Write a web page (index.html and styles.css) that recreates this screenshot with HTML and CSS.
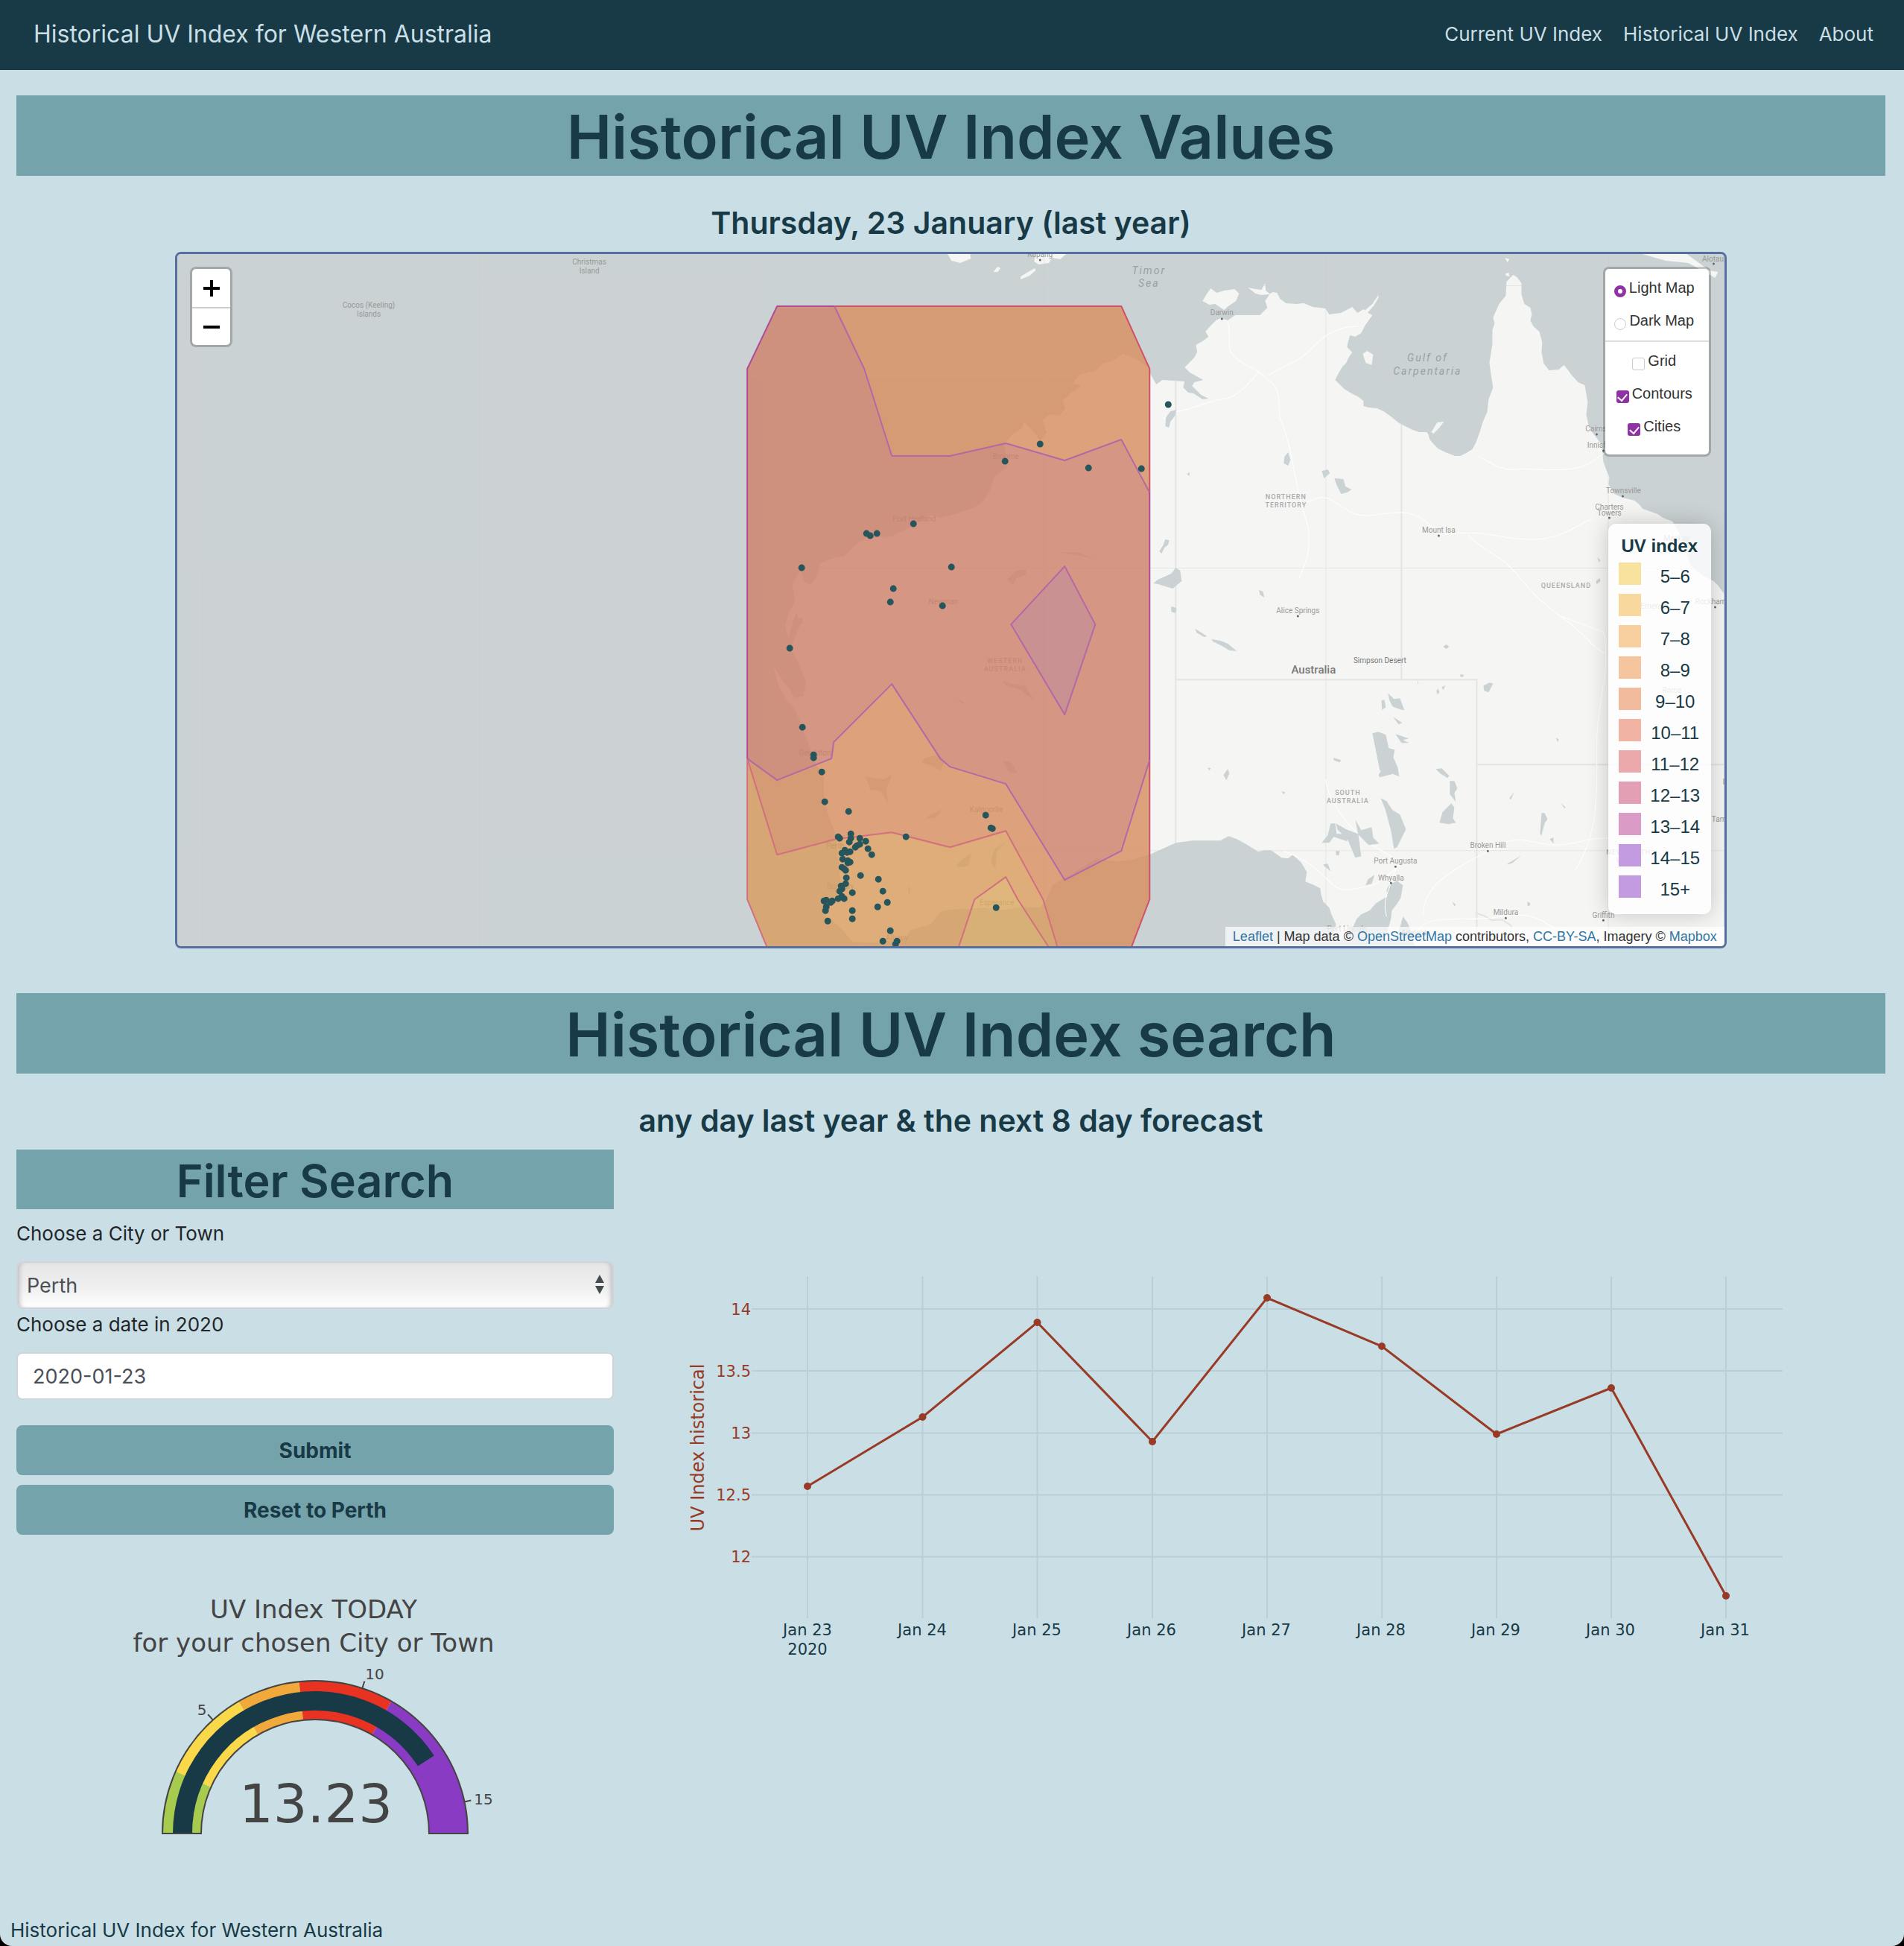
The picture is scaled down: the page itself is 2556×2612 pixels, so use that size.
FILE: index.html
```html
<!DOCTYPE html>
<html lang="en">
<head>
<meta charset="utf-8">
<meta name="viewport" content="width=device-width, initial-scale=1">
<title>Historical UV Index for Western Australia</title>
<link rel="stylesheet" href="styles.css">
</head>
<body>
<header class="navbar">
  <a class="brand" href="#">Historical UV Index for Western Australia</a>
  <nav class="nav-links">
    <a href="#">Current UV Index</a>
    <a href="#">Historical UV Index</a>
    <a href="#">About</a>
  </nav>
</header>

<main class="page">
  <h1 class="banner">Historical UV Index Values</h1>
  <h2 class="subtitle">Thursday, 23 January (last year)</h2>

  <section class="map" aria-label="UV index map">
    <svg class="map-canvas" viewBox="238 341 2076 929" preserveAspectRatio="xMidYMid slice" role="img" aria-label="Map of Australia">
      <rect class="sea" x="238" y="341" width="2076" height="929"/>
      <path class="sea-tile" d="M238 383h26v379h-26zM643 383h379v379H643zM264 762h758v379H264zM238 1141h405v129H238z"/>

      <!-- land -->
      <path class="land" d="M1543 495L1525 482 1507 475 1495 484 1480 488 1472 497 1449 503 1440 514 1451 518 1438 527 1426 538 1430 548 1422 558 1408 556 1399 564 1405 580 1396 592 1386 578 1375 567 1370 576 1361 581 1348 595 1352 627 1334 641 1328 660 1319 673 1308 681 1285 689 1262 695 1250 691 1238 697 1223 707 1197 720 1162 722 1148 732 1132 747 1115 750 1101 756 1096 774 1088 785 1080 782 1076 770 1075 766 1069 774 1063 785 1066 797 1066 810 1058 824 1054 839 1058 859 1064 835 1069 822 1074 838 1061 871 1072 890 1082 914 1078 934 1066 937 1060 925 1051 914 1038 894 1045 920 1055 938 1068 954 1078 980 1086 1000 1093 1023 1106 1040 1106 1069 1112 1095 1122 1120 1125 1150 1128 1184 1122 1204 1107 1207 1108 1230 1124 1241 1145 1264 1174 1265 1197 1262 1216 1258 1222 1248 1235 1244 1248 1241 1258 1230 1262 1223 1273 1221 1323 1218 1346 1221 1370 1217 1396 1218 1404 1208 1407 1201 1412 1188 1419 1184 1445 1169 1472 1152 1496 1156 1518 1154 1545 1146 1578 1131 1600 1128 1638 1128 1649 1122 1660 1126 1671 1132 1689 1143 1697 1141 1706 1141 1720 1151 1729 1152 1735 1147 1746 1157 1754 1170 1752 1183 1762 1187 1772 1192 1773 1200 1776 1210 1784 1218 1787 1227 1793 1240 1789 1262 1800 1262 1817 1242 1821 1233 1827 1227 1838 1222 1847 1212 1862 1203 1861 1194 1865 1187 1875 1182 1883 1188 1880 1205 1875 1213 1868 1222 1867 1232 1865 1240 1858 1262 1872 1260 1879 1245 1883 1230 1889 1238 1893 1247 1896 1262 1900 1270H2314V797L2306 786 2300 780 2286 773 2277 766 2268 757 2264 742 2260 730 2254 716 2245 700 2232 695 2225 690 2205 683 2200 677 2194 672 2178 668 2167 663 2159 650 2160 640 2156 631 2152 620 2150 597 2137 580 2132 570 2129 557 2131 540 2127 517 2118 513 2109 503 2104 496 2099 490 2092 496 2079 497 2072 488 2069 473 2070 460 2066 445 2058 438 2054 430 2056 422 2054 413 2046 408 2042 395 2042 380 2036 372 2031 369 2022 378 2021 397 2012 408 2008 417 2004 426 2006 434 2003 443 2003 462 1999 487 2002 508 2004 520 1998 536 1996 553 1990 567 1986 580 1981 594 1976 603 1968 608 1960 612 1953 612 1940 607 1930 602 1925 597 1919 590 1917 583 1915 580 1905 580 1896 577 1888 573 1878 568 1868 560 1857 552 1848 548 1837 547 1830 545 1830 538 1822 532 1814 528 1804 522 1798 516 1792 510 1797 500 1802 492 1807 487 1810 480 1815 473 1808 466 1809 460 1812 450 1819 452 1827 447 1832 437 1842 423 1836 420 1830 415 1822 420 1815 412 1800 420 1784 422 1779 414 1762 412 1750 407 1740 408 1726 407 1718 401 1714 393 1708 392 1704 395 1698 404 1701 413 1691 423 1675 423 1658 423 1648 430 1638 427 1632 430 1625 437 1618 445 1622 452 1614 458 1605 463 1607 472 1603 480 1595 488 1590 493 1597 500 1615 510 1603 513 1600 518 1606 524 1612 530 1622 535 1614 536 1602 528 1595 527 1588 520 1590 512 1575 511 1560 510 1552 516 1544 502z"/>
      <path class="land" d="M1614 404l6-10 5-7 8 6 10-3 14-2 6 6-4 10-12 8-4 4-12-8-8 1zM1675 386l10 2 8 1 5-9 1 10 6 5-12 1-8-2zM1829 475l6-4 8 5-2 14-8-3zM1921 580l8-13 9-1-6 8-8 8zM2020 346l6 2-3 4zM2021 367l4-1 1 5-5-1zM1272 341h30l1 6-14 6-12-3zM1390 341h41l-8 7-11-2-4 7-14 2-6-4zM1333 365l6-7 4 2-4 5zM1370 371l10-6 9-5 1 3-8 7-12 5zM2204 341h60l30 22 12 2-4 8-14-8-22-12-30-3zM1850 400l-6 10-12 14-4-4 14-12 8-12z"/>

      <!-- graticule -->
      <path class="graticule" d="M264.500 341v929M643.500 341v929M1022.500 341v929M1401.500 341v929M1779.500 341v929M2158.500 341v929M238 383.500h2076M238 762.500h2076M238 1141.500h2076"/>
      <!-- state borders -->
      <path class="border" d="M1578 511V1131M1881 570V912M1578 912H1982V1270M1982 1026H2314M1980 1225l12 4 10 6 14-1 12 8 2 12"/>
      <!-- highways -->
      <path class="road" d="M1648 432c6 22-4 36 10 48s22 12 30 18 18 14 24 22 4 30 6 42c14 30 18 70 26 104s18 44 10 84l-10 26M1690 498c-14 18-30 36-50 38s-40 14-60 16l-20 10M1702 504c22-14 40-18 54-32s30-34 66-34M1755 674c16-8 24-8 34-2s24 20 44 20 46-10 68 0 22 28 56 24 60 8 100 8 60-20 80-28M1983 612c14 6 30 20 50 18s40 2 70 0 40-16 50-22M1970 718c20 20 40 26 56 42s30 40 70 68 40 44 60 48M1779 1046c4 26 20 50 44 74s52 24 50 44-20 40-12 66M1723 1142c30 12 40 20 60 40s30 10 50 8 40-26 56-36M1910 1228c0-40 40-60 80-82s40-22 80-14 60-12 100-6M1894 1260c20-40 60-20 120-30s60 20 90 18M2092 826l60 22c10 40-4 80-8 130s10 130-30 190"/>

      <!-- lakes -->
      <path class="lake" d="M1565 560l6-8 8-2-2 8-6 8-2 8-5-2zM1724 613l5-6 3 10-3 8-6-3zM1774 632l8-2 3 5-8 7zM1791 642l12 1 3 10 8 4-6 4-8 2-6-12zM1593 636l4-2-1 5zM1564 724l5 1-1 6-5 4-4 8-3-3 5-8zM1554 778l18-8 6-8 6 4 2 14-12 10-20-6-6-1zM1690 792l5 2 2 8-6-4zM1572 814l7 2-1 7-6-2zM1604 844l10 6 6 4-4 1-10-6zM1626 858l12 2 10 4 12 10-10-1-10-6-12-6zM1937 868l4-3 4 3-4 3zM1960 905l5 1-2 3-3-1zM1991 920l8-4 5 1-6 12-6-2zM1928 927l2-3 2 5-3 3zM1935 922l5-2-3 6zM1902 912l2 5-1 1zM1854 940l4-1 2 10-5 4zM1863 930l8 8 8-1 6 16-6-1-10-4-4-8zM1870 962l12 8-5 2zM1842 984l8-2 10 4 4 18 8 2-2 10 6 14 2 12-10-4-10-2-6-2zM1873 985l18 6-8 2 8 4-10 0zM1850 1040l4-6 20-5-6 10-16 4zM1790 1017l10 3-2 3-8-3zM1927 1032l8-1 10 10-2 3-10-6zM1946 1048l6 0 4 10-4 6 2 12-8-10zM1948 1078l4 6-2 14 4 6-10 2-12-2 4-14 8-8zM1853 1071l8 4 8 12 10 6 8 20-12 24-4 2-4-24-8-30zM1786 1105l6 0 2 14 16 0-2 10-18-6-6 8-10 0 8-10zM1793 1105l14 8 16 6 4 30-8 2-10-24-14-14zM1819 1100l8 14 14-4 2 14 8 8-14 2-14-14zM1793 1142h5l-1 6-4-1zM1642 1040l6-8 2 6-4 9zM1621 1030l4 1-2 3zM1720 1062l5 1-2 3zM2069 1091l4 0 4 8-4 6-4 16-2-2zM2080 1126l5-2 0 8zM2022 1160l20-12-12 10-6 2zM2032 1063l-4 10-2-2zM2095 1078l6 5-1 2zM2142 780l5-4 1 4-5 4zM2144 748l4 4-2 3zM2088 990l4 2-1 4zM1949 1210l5 4-2 2zM2050 1210l4 2-1 4-3-1zM1776 1160l6-1 4 10-8-6zM1836 1180l9-6-4 12-8 2z"/>
      <path class="lake" d="M1352 778l12-12 14-2-2 8-12 4-4 10zM1346 914l14 4 16 2 12 20-18-14-20-6zM1240 1018l20-6 8 10-6 12-10-6-14-4zM1162 1042l24 4 12-8-8 20 2 20-10-16-14-2-4-12zM1346 1020l12 4 8 14-12-2zM1284 1160l20-16-4 18-14 2zM1334 1140l16-10-12 12-2 24-6-8zM1246 1095l20-10-10 12-14 2zM1284 938l10 4-1 3zM1218 1188l4 6-2 8zM1420 742l26-1 24 10-22-6zM1066 834l10-6 2 8-14 10z"/>

      <g class="place">
        <text x="791" y="355">Christmas</text><text x="791" y="367">Island</text>
        <text x="495" y="413">Cocos (Keeling)</text><text x="495" y="425">Islands</text>
        <text x="1396" y="345">Kupang</text><text x="1640" y="423">Darwin</text>
        <text x="2142" y="579">Cairns</text><text x="2148" y="601">Innisfail</text>
        <text x="2179" y="662">Townsville</text><text x="2160" y="684">Charters</text><text x="2160" y="692">Towers</text>
        <text x="2299" y="351">Alotau</text><text x="1931" y="715">Mount Isa</text><text x="1742" y="823">Alice Springs</text>
        <text x="1997" y="1138">Broken Hill</text><text x="1873" y="1159">Port Augusta</text><text x="1867" y="1182">Whyalla</text>
        <text x="2021" y="1228">Mildura</text><text x="2152" y="1232">Griffith</text><text x="1808" y="1250">Port Lincoln</text>
        <text x="1900" y="1256">Adelaide</text><text x="2250" y="726">Mackay</text><text x="2306" y="811">Rockhampton</text>
        <text x="2220" y="817">Emerald</text><text x="2244" y="930">Roma</text><text x="2328" y="1053">Inverell</text><text x="2320" y="1103">Tamworth</text>
        <text x="1350" y="616">Broome</text><text x="1227" y="700">Port Hedland</text><text x="1266" y="811">Newman</text>
        <text x="1094" y="1014">Geraldton</text><text x="1128" y="1193">Bunbury</text>
        <text x="1338" y="1215">Esperance</text><text x="1204" y="1262">Albany</text><text x="1324" y="1090">Kalgoorlie</text>
      </g>
      <g class="place place-dark"><text x="1852" y="890">Simpson Desert</text><text x="1121" y="1139">Perth</text></g>
      <text class="country" x="1763" y="904">Australia</text>
      <g class="water">
        <text x="1542" y="368">Timor</text><text x="1542" y="385">Sea</text>
        <text x="1916" y="485">Gulf of</text><text x="1916" y="503">Carpentaria</text>
      </g>
      <g class="state">
        <text x="1726" y="670">NORTHERN</text><text x="1726" y="681">TERRITORY</text>
        <text x="2102" y="789">QUEENSLAND</text>
        <text x="1809" y="1067">SOUTH</text><text x="1809" y="1078">AUSTRALIA</text>
        <text x="2186" y="1147">NEW SOUTH</text><text x="2186" y="1158">WALES</text>
        <text x="1349" y="890">WESTERN</text><text x="1349" y="901">AUSTRALIA</text>
      </g>
      <path class="town-dot" d="M1396 349h0M1640 428h0M2143 583h0M2152 605h0M2178 666h0M2160 695h0M2300 354h0M1931 719h0M1742 827h0M1997 1142h0M1873 1163h0M1867 1185h0M2021 1232h0M2152 1235h0M2302 815h0"/>

      <!-- UV contours -->
      <g class="contour-fills">
        <path class="uv-orange" d="M1043 411H1505L1543 495V1207L1519 1270H1029L1003 1207V495z"/>
        <path class="uv-red" d="M1043 411H1120L1160 495 1197 612H1275L1350 595 1429 618 1505 590 1543 661V1020L1505 1142 1429 1181 1350 1052 1275 1029 1262 1018 1197 918 1119 996 1116 1018 1043 1047 1003 1018V495z"/>
        <path class="uv-pink" d="M1429 760L1470 838 1429 959 1357 838z"/>
        <path class="uv-amber" d="M1003 1018L1043 1147 1122 1126 1197 1117 1275 1137 1350 1115 1400 1207 1419 1270H1029L1003 1207z"/>
        <path class="uv-yellow" d="M1287 1270L1308 1207 1350 1177 1366 1207 1407 1270z"/>
      </g>
      <path class="line-rose" d="M1029 1270L1003 1207V1018L1043 1147 1122 1126 1197 1117 1275 1137 1350 1115 1400 1207 1419 1270M1287 1270L1308 1207 1350 1177 1366 1207 1407 1270"/>
      <path class="line-crimson" d="M1120 411H1505L1543 495V661M1543 1020V1207L1519 1270"/>
      <path class="line-violet" d="M1120 411L1160 495 1197 612H1275L1350 595 1429 618 1505 590 1543 661M1543 1020L1505 1142 1429 1181 1350 1052 1275 1029 1262 1018 1197 918 1119 996 1116 1018 1043 1047 1003 1018M1429 760L1470 838 1429 959 1357 838z"/>
      <path class="line-magenta" d="M1120 411H1043L1003 495V1018M1543 661V1020"/>

      <!-- cities and towns -->
      <path class="city" d="M1568 543h0M1396 596h0M1349 619h0M1461 628h0M1532 629h0M1226 703h0M1163 716h0M1168 719h0M1177 716h0M1076 762h0M1277 761h0M1199 790h0M1195 808h0M1265 813h0M1060 870h0M1077 976h0M1092 1013h0M1092 1017h0M1103 1036h0M1107 1076h0M1139 1089h0M1323 1094h0M1330 1111h0M1332 1112h0M1216 1123h0M1142 1119h0M1125 1123h0M1127 1125h0M1142 1125h0M1140 1130h0M1154 1125h0M1162 1129h0M1154 1133h0M1150 1135h0M1148 1137h0M1165 1139h0M1170 1147h0M1134 1141h0M1141 1143h0M1137 1144h0M1130 1145h0M1131 1153h0M1138 1155h0M1141 1157h0M1138 1158h0M1130 1164h0M1133 1166h0M1135 1168h0M1136 1178h0M1155 1175h0M1179 1180h0M1135 1186h0M1129 1189h0M1130 1193h0M1127 1196h0M1144 1198h0M1185 1196h0M1191 1211h0M1178 1217h0M1130 1203h0M1125 1206h0M1133 1206h0M1106 1209h0M1109 1208h0M1117 1209h0M1115 1211h0M1109 1217h0M1108 1222h0M1144 1222h0M1144 1233h0M1111 1236h0M1195 1249h0M1185 1263h0M1204 1263h0M1202 1267h0M1337 1218h0"/>
    </svg>

    <div class="zoom-control">
      <button type="button" aria-label="Zoom in"><svg width="24" height="24" viewBox="0 0 24 24"><path d="M12 1v22M1 12h22"/></svg></button>
      <button type="button" aria-label="Zoom out"><svg width="24" height="24" viewBox="0 0 24 24"><path d="M1 12h22"/></svg></button>
    </div>

    <form class="layer-control">
      <div class="layer-group">
        <label><input type="radio" name="base" checked>Light Map</label>
        <label><input type="radio" name="base">Dark Map</label>
      </div>
      <div class="layer-group overlays">
        <label><input type="checkbox">Grid</label>
        <label><input type="checkbox" checked>Contours</label>
        <label><input type="checkbox" checked>Cities</label>
      </div>
    </form>

    <div class="legend">
      <h4>UV index</h4>
      <ul>
        <li><i class="s5"></i><span>5–6</span></li>
        <li><i class="s6"></i><span>6–7</span></li>
        <li><i class="s7"></i><span>7–8</span></li>
        <li><i class="s8"></i><span>8–9</span></li>
        <li><i class="s9"></i><span>9–10</span></li>
        <li><i class="s10"></i><span>10–11</span></li>
        <li><i class="s11"></i><span>11–12</span></li>
        <li><i class="s12"></i><span>12–13</span></li>
        <li><i class="s13"></i><span>13–14</span></li>
        <li><i class="s14"></i><span>14–15</span></li>
        <li><i class="s14"></i><span>15+</span></li>
      </ul>
    </div>

    <p class="attribution"><a href="#">Leaflet</a> | Map data © <a href="#">OpenStreetMap</a> contributors, <a href="#">CC-BY-SA</a>, Imagery © <a href="#">Mapbox</a></p>
  </section>

  <h1 class="banner">Historical UV Index search</h1>
  <h2 class="subtitle">any day last year &amp; the next 8 day forecast</h2>

  <div class="search">
    <section class="filter">
      <h3 class="filter-title">Filter Search</h3>
      <form>
        <label for="city">Choose a City or Town</label>
        <div class="select-box">
          <select id="city"><option>Perth</option></select>
          <svg width="14" height="26" viewBox="0 0 14 26" aria-hidden="true"><path d="M7 0l6 11H1zM7 26l6-11H1z"/></svg>
        </div>
        <label for="date">Choose a date in 2020</label>
        <input id="date" type="text" value="2020-01-23">
        <div class="actions">
          <button type="submit">Submit</button>
          <button type="reset">Reset to Perth</button>
        </div>
      </form>
      <svg class="gauge" viewBox="22 2061 802 430" role="img" aria-label="UV Index today gauge">
        <g class="gauge-title"><text x="421" y="2173">UV Index TODAY</text><text x="421" y="2218">for your chosen City or Town</text></g>
        <!-- each step spans its value range on a 1 to 16 scale, 12 degrees per unit -->
        <g class="steps" fill="none" stroke-width="52" transform="translate(423 2462)">
          <path stroke="#a6cb4f" d="M-179 0A179 179 0 0 1 -163.500 -72.800"/>
          <path stroke="#f9d84a" d="M-163.500 -72.800A179 179 0 0 1 -89.500 -155"/>
          <path stroke="#f1a93b" d="M-89.500 -155A179 179 0 0 1 -18.700 -178"/>
          <path stroke="#e83323" d="M-18.700 -178A179 179 0 0 1 89.500 -155"/>
          <path stroke="#8a3bc4" d="M89.500 -155A179 179 0 0 1 179 0"/>
          <path stroke="#173a46" stroke-width="26" d="M-178 0A178 178 0 0 1 148.900 -97.500"/>
          <path class="outline" d="M-205 0A205 205 0 0 1 205 0H153A153 153 0 0 0 -153 0z"/>
          <path class="outline" d="M-137.200 -152.300L-143.800 -159.800M63.300 -195L66.400 -204.500M200.500 -42.600L209.300 -44.500"/>
        </g>
        <g class="gauge-ticks"><text x="271" y="2303">5</text><text x="503" y="2255">10</text><text x="649" y="2423">15</text></g>
        <text class="gauge-value" x="424" y="2447">13.23</text>
      </svg>
    </section>

    <svg class="chart" viewBox="884 1544 1648 720" role="img" aria-label="UV Index line chart">
      <path class="grid" d="M1085 1714v459M1239.500 1714v459M1393.500 1714v459M1548 1714v459M1702 1714v459M1856 1714v459M2010 1714v459M2164 1714v459M2318 1714v459M1010 1758h1384M1010 1841h1384M1010 1924.500h1384M1010 2007.500h1384M1010 2090.500h1384"/>
      <path class="series" d="M1085 1996L1239.500 1903 1393.500 1776 1548 1936 1702 1743 1856 1808 2010 1926 2164 1864 2318 2143"/>
      <path class="markers" d="M1085 1996h0M1239.500 1903h0M1393.500 1776h0M1548 1936h0M1702 1743h0M1856 1808h0M2010 1926h0M2164 1864h0M2318 2143h0"/>
      <g class="y-labels"><text x="1009" y="1766">14</text><text x="1009" y="1849">13.5</text><text x="1009" y="1932">13</text><text x="1009" y="2015">12.5</text><text x="1009" y="2098">12</text></g>
      <g class="x-labels"><text x="1085" y="2196">Jan 23</text><text x="1085" y="2222">2020</text><text x="1239" y="2196">Jan 24</text><text x="1393" y="2196">Jan 25</text><text x="1547" y="2196">Jan 26</text><text x="1701" y="2196">Jan 27</text><text x="1855" y="2196">Jan 28</text><text x="2009" y="2196">Jan 29</text><text x="2163" y="2196">Jan 30</text><text x="2317" y="2196">Jan 31</text></g>
      <text class="y-title" transform="translate(946 1944) rotate(-90)">UV Index historical</text>
    </svg>
  </div>
</main>

<footer class="footer">Historical UV Index for Western Australia</footer>
</body>
</html>
```
FILE: styles.css
```css
:root {
  --ink: #173a46;
  --pale: #cadee5;
  --teal: #75a3ab;
  --rust: #983b26;
}

* { box-sizing: border-box; }

html { background: #000; }

body {
  display: flex;
  flex-direction: column;
  min-height: 100vh;
  margin: 0;
  border-radius: 0 0 16px 16px;
  background: var(--pale);
  color: var(--ink);
  font-family: Inter, "Liberation Sans", sans-serif;
  font-size: 26px;
}

h1, h2, h3, h4, p, ul { margin: 0; padding: 0; }
a { text-decoration: none; }

.navbar {
  display: flex;
  align-items: center;
  justify-content: space-between;
  height: 94px;
  padding: 0 41px 4px 45px;
  background: var(--ink);
}
.navbar a { color: var(--pale); }
.brand { font-size: 32px; }
.nav-links { display: flex; gap: 28px; }

.page {
  flex: 1;
  padding: 34px 25px 0 22px;
}

.banner {
  padding-top: 4px;
  background: var(--teal);
  font-size: 81px;
  font-weight: 600;
  line-height: 104px;
  text-align: center;
}
.subtitle {
  padding: 36px 0 12px;
  font-size: 41px;
  font-weight: 600;
  line-height: 54px;
  text-align: center;
}

/* Map */
.map {
  position: relative;
  width: 83%;
  margin: 0 auto 60px;
  overflow: hidden;
  border: 3px solid #586e9c;
  border-radius: 8px;
  font-family: "Liberation Sans", Arial, sans-serif;
}
.map-canvas { display: block; width: 100%; height: auto; }
.sea { fill: #cad2d4; }
.sea-tile { fill: #ccd1d4; }
.land { fill: #f5f5f3; }
.lake { fill: #cad2d4; }
.graticule { fill: none; stroke: #ccc; stroke-opacity: .4; }
.border { fill: none; stroke: #e4e4e3; stroke-width: 2; }
.road { fill: none; stroke: #fff; stroke-width: 1; }
.place { fill: #999; font: 10px Roboto, sans-serif; text-anchor: middle; }
.place-dark { fill: #777; }
.country { fill: #777; font: 500 15px Roboto, sans-serif; text-anchor: middle; }
.water { fill: #98a2a5; font: italic 14px Roboto, sans-serif; letter-spacing: 2px; text-anchor: middle; }
.state { fill: #aaa; font: 500 9px Roboto, sans-serif; letter-spacing: 1px; text-anchor: middle; }
.town-dot { stroke: #666; stroke-width: 3; stroke-linecap: round; }

.contour-fills { opacity: .81; }
.uv-orange { fill: #d88f60; }
.uv-red { fill: #ce826b; }
.uv-pink { fill: #c17a7c; }
.uv-amber { fill: #d99d5f; }
.uv-yellow { fill: #dba962; }
.line-rose, .line-crimson, .line-violet, .line-magenta { fill: none; stroke-width: 2; stroke-linejoin: round; }
.line-rose { stroke: #d2707f; }
.line-crimson { stroke: #d0526c; }
.line-violet { stroke: #b468a6; }
.line-magenta { stroke: #b14c97; }
.city { stroke: #26555b; stroke-width: 9; stroke-linecap: round; }

.zoom-control, .layer-control {
  position: absolute;
  top: 17px;
  border: 3px solid rgba(0, 0, 0, .2);
  border-radius: 8px;
  background: #fff;
  background-clip: padding-box;
}
.zoom-control { left: 17px; }
.zoom-control button {
  display: grid;
  place-items: center;
  width: 51px;
  height: 51px;
  padding: 0;
  border: 0;
  background: none;
}
.zoom-control button + button { border-top: 2px solid #ccc; }
.zoom-control path { stroke: #000; stroke-width: 4; }

.layer-control { right: 18px; width: 145px; height: 255px; color: #333; font-size: 20px; }
.layer-group {
  display: flex;
  flex-direction: column;
  align-items: center;
  gap: 18px;
  padding: 12px 7px 14px 0;
}
.overlays { border-top: 2px solid #ddd; }
.layer-control label { display: flex; align-items: flex-end; gap: 4px; height: 26px; line-height: 26px; }
.layer-control input { appearance: none; margin: 0; border: 1px solid #ccc; background: #fff; }
.layer-control input[type="radio"] { width: 16px; height: 16px; border-radius: 50%; }
.layer-control input[type="radio"]:checked { border: 5px solid #8f32a3; }
.layer-control input[type="checkbox"] { width: 17px; height: 17px; border-radius: 3px; }
.layer-control input[type="checkbox"]:checked { border: 0; background: #8f32a3; }
.layer-control input[type="checkbox"]:checked::before {
  display: block;
  width: 6px;
  height: 10px;
  margin: 2px auto;
  border: solid #fff;
  border-width: 0 2px 2px 0;
  content: "";
  rotate: 40deg;
}

.legend {
  position: absolute;
  right: 18px;
  bottom: 43px;
  width: 138px;
  padding: 10px 14px;
  border-radius: 10px;
  background: rgba(255, 255, 255, .8);
  box-shadow: 0 0 30px rgba(0, 0, 0, .2);
  color: var(--ink);
  font-size: 24px;
}
.legend h4 { height: 42px; font-size: 24px; line-height: 40px; text-align: center; }
.legend ul { list-style: none; }
.legend li { display: flex; gap: 12px; height: 42px; line-height: 38px; }
.legend i { width: 30px; height: 30px; }
.legend span { flex: 1; text-align: center; white-space: nowrap; }
.s5 { background: #f9e19e; }
.s6 { background: #f8d89c; }
.s7 { background: #f7cf9e; }
.s8 { background: #f5c59e; }
.s9 { background: #f3bb9e; }
.s10 { background: #f1b3a3; }
.s11 { background: #eba9ab; }
.s12 { background: #e3a0b4; }
.s13 { background: #da9cc6; }
.s14 { background: #c29be0; }

.attribution {
  position: absolute;
  right: 0;
  bottom: 0;
  padding: 0 10px;
  background: rgba(255, 255, 255, .7);
  color: #333;
  font-size: 18px;
  line-height: 26px;
}
.attribution a { color: #2f76a6; }

/* Search */
.search {
  display: grid;
  grid-template-columns: 802fr 1648fr;
  gap: 59px;
  align-items: start;
}
.filter-title {
  padding-top: 4px;
  background: var(--teal);
  font-size: 61px;
  font-weight: 600;
  line-height: 76px;
  text-align: center;
}
.filter form { padding-top: 12px; }
.filter label { display: block; padding-bottom: 16px; color: #212529; line-height: 42px; }
.filter select, .filter input {
  display: block;
  width: 100%;
  height: 64px;
  padding: 0 20px;
  border: 2px solid #ced4da;
  border-radius: 8px;
  background: #fff;
  color: #495057;
  font: inherit;
  font-size: 27px;
}
.select-box { position: relative; }
.filter select {
  appearance: none;
  padding: 0 12px;
  background: linear-gradient(#e6e6e6, #efefef 55%, #fff);
  box-shadow: inset 6px 0 6px -4px #bbb, inset -6px 0 6px -4px #bbb;
}
.select-box svg { position: absolute; top: 18px; right: 12px; fill: #454c50; }
.actions { display: grid; gap: 13px; padding-top: 34px; }
.actions button {
  height: 67px;
  padding: 0;
  border: 0;
  border-radius: 8px;
  background: var(--teal);
  color: var(--ink);
  font: bold 28px Inter, sans-serif;
}

.gauge, .chart { display: block; width: 100%; height: auto; font-family: "DejaVu Sans", Verdana, sans-serif; }
.gauge { fill: #444; text-anchor: middle; }
.gauge-title { font-size: 34px; }
.gauge-ticks { font-size: 20px; }
.gauge-value { font-size: 72px; }
.outline { fill: none; stroke: #444; stroke-width: 2; }

.chart path { fill: none; }
.grid { stroke: #bacfd5; stroke-width: 2; }
.series { stroke: var(--rust); stroke-width: 3; }
.markers { stroke: var(--rust); stroke-width: 10; stroke-linecap: round; }
.y-labels { fill: var(--rust); font-size: 21px; text-anchor: end; }
.x-labels { fill: var(--ink); font-size: 21px; text-anchor: middle; }
.y-title { fill: var(--rust); font-size: 24px; text-anchor: middle; }

.footer { padding: 0 14px 9px; line-height: 24px; }
```
